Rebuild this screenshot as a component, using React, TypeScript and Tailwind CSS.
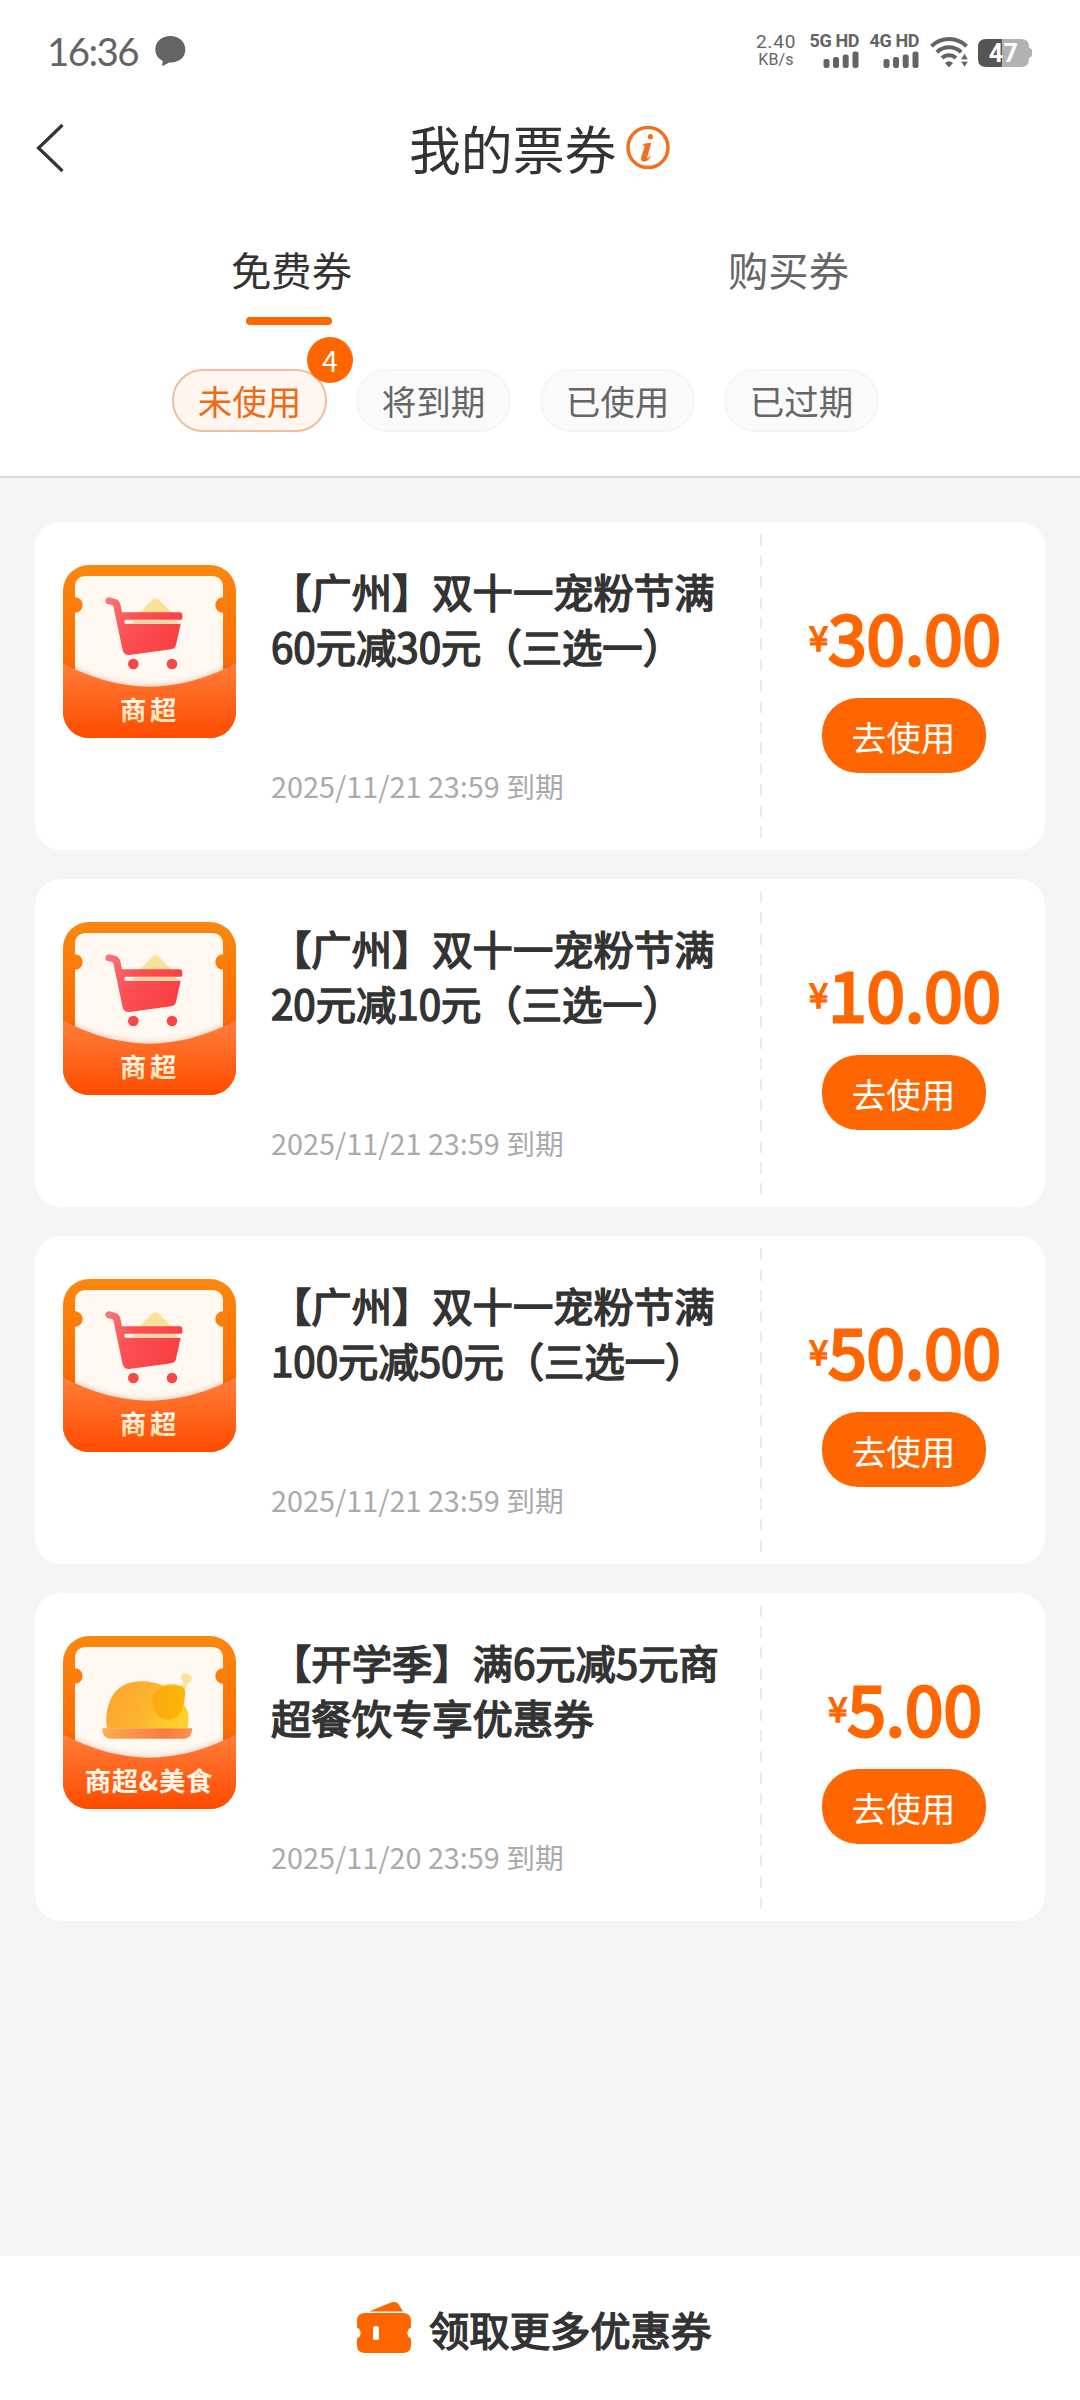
import React from "react";

type CouponKind = "market" | "food";

interface Coupon {
  title: string[];
  expires: string;
  price: string;
  kind: CouponKind;
}

const coupons: Coupon[] = [
  { title: ["【广州】双十一宠粉节满", "60元减30元（三选一）"], expires: "2025/11/21 23:59 到期", price: "30.00", kind: "market" },
  { title: ["【广州】双十一宠粉节满", "20元减10元（三选一）"], expires: "2025/11/21 23:59 到期", price: "10.00", kind: "market" },
  { title: ["【广州】双十一宠粉节满", "100元减50元（三选一）"], expires: "2025/11/21 23:59 到期", price: "50.00", kind: "market" },
  { title: ["【开学季】满6元减5元商", "超餐饮专享优惠券"], expires: "2025/11/20 23:59 到期", price: "5.00", kind: "food" },
];

function Signal({ label }: { label: string }) {
  return (
    <div className="flex w-[49px] flex-col items-end">
      <span className="whitespace-nowrap font-['Roboto'] text-[18px] font-bold leading-[16px] tracking-[-0.4px]">{label}</span>
      <svg className="mt-[2px] h-[17px] w-[36px]" viewBox="0 0 36 17" fill="currentColor">
        <rect x="0.5" y="8" width="6" height="9" rx="2.2" />
        <rect x="10" y="6" width="6" height="11" rx="2.2" />
        <rect x="19.7" y="3.5" width="6" height="13.5" rx="2.2" />
        <rect x="29.5" y="0.5" width="6" height="16.5" rx="2.2" />
      </svg>
    </div>
  );
}

function StatusBar() {
  return (
    <div className="flex h-[98px] items-start justify-between pl-[47px] pr-[48px] text-[#646464]">
      <div className="flex items-start pt-[31px]">
        <span className="font-['Lato'] text-[38.5px] leading-[40px] tracking-[-1.6px]">16:36</span>
        <svg className="ml-[17px] mt-[5px] h-[30px] w-[31px]" viewBox="0 0 31 30" fill="currentColor">
          <path d="M15.3 0C23.8 0 30.3 5.6 30.3 13.6S23.8 26.6 16 26.6c-1.600 0-2.600.2-3.600.8L8.200 29.700c-.6.3-1.100 0-1-.7l.6-4C3.400 23 .3 19 .3 13.600.3 5.600 6.900 0 15.300 0z" />
        </svg>
      </div>
      <div className="flex items-start pt-[33px]">
        <div className="mr-[13px] flex w-[42px] flex-col items-center">
          <span className="font-['Roboto'] text-[19px] leading-[18px] tracking-[0.8px]">2.40</span>
          <span className="font-['Roboto'] text-[16px] leading-[17px] tracking-[0.2px]">KB/s</span>
        </div>
        <Signal label="5G HD" />
        <div className="w-[11px]" />
        <Signal label="4G HD" />
        <svg className="ml-[11px] mt-[3px] h-[32px] w-[38px]" viewBox="0 0 38 32" fill="none" stroke="currentColor" strokeWidth="4">
          <path d="M1.500 10.200A25 25 0 0 1 36.500 10.200" />
          <path d="M6.800 16.200A17.500 17.500 0 0 1 31.200 16.200" />
          <path d="M12 22A10 10 0 0 1 26 22" />
          <path d="M15 27Q19 23.500 23 27L19 31.500Z" fill="currentColor" stroke="none" />
          <path d="M31 23.500L34.500 17.500L38 23.500ZM31 25.500H38L34.500 31Z" fill="currentColor" stroke="#fff" strokeWidth="0.300" />
        </svg>
        <svg className="ml-[10px] mt-[6px] h-[28px] w-[54px]" viewBox="0 0 54 28">
          <path d="M8 0H43Q51 0 51 8V9Q54 9.500 54 11V16Q54 18 51 19V20Q51 28 43 28H24V0Z" fill="#b2b2b2" />
          <path d="M8 0H24V28H8Q0 28 0 20V8Q0 0 8 0Z" fill="#555" />
          <text x="25.500" y="23" textAnchor="middle" fill="#fff" fontFamily="Roboto" fontWeight="700" fontSize="25" letterSpacing="0.500">47</text>
        </svg>
      </div>
    </div>
  );
}

function TitleBar() {
  return (
    <div className="flex h-[100px] items-center">
      <svg className="ml-[35px] h-[52px] w-[30px]" viewBox="0 0 30 52" fill="none" stroke="#333" strokeWidth="3.200">
        <path d="M27.500 3L3.500 26L27.500 49" />
      </svg>
      <h1 className="ml-[344px] mt-[-1px] text-[51.84px] leading-[60px] text-[#333]">我的票券</h1>
      <svg className="ml-[9px] h-[46px] w-[46px]" viewBox="0 0 46 46">
        <circle cx="23" cy="22.500" r="20" fill="none" stroke="#f07020" strokeWidth="3.500" />
        <circle cx="25.400" cy="11.700" r="2.600" fill="#f07020" />
        <path d="M17.500 20.300C20 18.700 22.500 18.200 26 18L22 32C21.500 33.800 22.500 34 25.600 31.200C24 35 21 36.600 18.500 36.300C16 36 16 34 16.600 32L19.600 22.500C20 20.800 19.500 20.300 17.500 20.300Z" fill="#f07020" stroke="#f07020" strokeWidth="0.600" />
      </svg>
    </div>
  );
}

function Tabs() {
  return (
    <div className="flex h-[127px] pl-[43px]">
      <div className="flex w-[497px] flex-col items-center pt-[46px]">
        <span className="text-[40.32px] leading-[50px] text-[#333]">免费券</span>
        <span className="mr-[5px] mt-[23px] h-2 w-[86px] rounded-full bg-[#ff6600]" />
      </div>
      <div className="flex w-[497px] flex-col items-center pt-[46px]">
        <span className="text-[40.32px] leading-[50px] text-[#666]">购买券</span>
      </div>
    </div>
  );
}

function Filters() {
  const chip = "flex h-[63px] w-[155px] items-center justify-center rounded-[31px] border-2 border-[#f5f5f5] bg-[#fafafa] pt-[1px] text-[34.56px] text-[#666]";
  return (
    <div className="flex gap-[29px] pl-[172px] pt-[44px]">
      <div className="relative flex h-[63px] w-[155px] items-center justify-center rounded-[31px] border-2 border-[#f2bd9c] bg-[#fff6f0] pt-[1px] text-[34.56px] text-[#ec6b16]">
        未使用
        <span className="absolute right-[-28px] top-[-34px] flex size-[46px] items-center justify-center rounded-full bg-[#ff6600] pb-[1px] text-[28.8px] text-white">4</span>
      </div>
      <div className={chip}>将到期</div>
      <div className={chip}>已使用</div>
      <div className={chip}>已过期</div>
    </div>
  );
}

function Cart() {
  return (
    <g>
      <path d="M222 150L268 104Q277 95 287 104L334 150Z" fill="#fbe09a" />
      <path
        d="M139 97L156 101Q169 105 172 118L177 142H350Q358 142 358 150V160Q358 164 354 164H188Q184 164 184 169V171Q184 176 188 176H353L339 240Q336 251 324 253L199 270Q183 271 179 256L151 124Q149 120 144 119L136 118Q127 115 127 107Q129 97 139 97Z"
        fill="url(#cartRed)"
      />
      <rect x="186" y="165" width="168" height="10" rx="4" fill="#fff9f2" />
      <path d="M214 166H338L344 175H206Z" fill="#fbd49a" />
      <circle cx="211" cy="297" r="16" fill="#f5484b" />
      <circle cx="327" cy="297" r="16" fill="#f5484b" />
    </g>
  );
}

function Roast() {
  return (
    <g>
      <path d="M352 154L362 137Q350 130 355 117Q361 107 371 113Q386 118 388 130Q385 141 375 140L366 164Z" fill="#fbe2a0" />
      <path d="M133 277C126 252 130 220 143 190C160 152 195 136 236 136C260 136 282 141 300 149C322 142 352 144 362 156C369 168 365 188 361 203C376 222 381 245 373 277Z" fill="url(#roastBody)" />
      <path d="M268 205C264 175 280 153 312 151C337 152 357 143 366 163C367 190 362 220 345 240C316 264 274 247 268 205Z" fill="url(#roastLeg)" />
      <path d="M118 277H387V283Q384 307 365 308H140Q118 306 118 277Z" fill="url(#plate)" />
    </g>
  );
}

function CouponIcon({ kind }: { kind: CouponKind }) {
  return (
    <svg className="size-[173px] rounded-[26px]" viewBox="0 0 519 519">
      <defs>
        <linearGradient id="frame" x1="0" y1="0" x2="0" y2="1">
          <stop offset="0" stopColor="#fa880f" />
          <stop offset="0.600" stopColor="#fe6a02" />
        </linearGradient>
        <linearGradient id="pocket" x1="0" y1="295" x2="0" y2="519" gradientUnits="userSpaceOnUse">
          <stop offset="0" stopColor="#ff7e3a" />
          <stop offset="1" stopColor="#ff4b00" />
        </linearGradient>
        <linearGradient id="cartRed" x1="0" y1="0" x2="1" y2="0.400">
          <stop offset="0" stopColor="#f77a7a" />
          <stop offset="0.450" stopColor="#fb5055" />
          <stop offset="1" stopColor="#fb4043" />
        </linearGradient>
        <linearGradient id="roastBody" x1="0" y1="0" x2="1" y2="0.300">
          <stop offset="0" stopColor="#fca32f" />
          <stop offset="0.600" stopColor="#fdb52f" />
          <stop offset="1" stopColor="#fdd02c" />
        </linearGradient>
        <linearGradient id="roastLeg" x1="0" y1="0" x2="1" y2="0">
          <stop offset="0" stopColor="#fba912" />
          <stop offset="1" stopColor="#fdb704" />
        </linearGradient>
        <linearGradient id="plate" x1="0" y1="0" x2="1" y2="0">
          <stop offset="0" stopColor="#fcae4c" />
          <stop offset="0.700" stopColor="#f97b40" />
          <stop offset="1" stopColor="#fb934a" />
        </linearGradient>
        <linearGradient id="label" x1="0" y1="0" x2="0" y2="1">
          <stop offset="0.300" stopColor="#fffaf0" />
          <stop offset="1" stopColor="#ffd79a" />
        </linearGradient>
        <filter id="soft" x="-20%" y="-20%" width="140%" height="140%">
          <feGaussianBlur stdDeviation="11" />
        </filter>
      </defs>
      <rect width="519" height="519" fill="url(#frame)" />
      <path d="M71 33H445Q480 33 480 68V97A23 23 0 0 0 480 143V420H36V143A23 23 0 0 0 36 97V68Q36 33 71 33Z" fill="#fff9f2" />
      {kind === "market" ? <Cart /> : <Roast />}
      <path d="M0 295Q259 435 519 295V519H0Z" fill="#b0502c" opacity="0.350" filter="url(#soft)" />
      <path d="M0 295Q259 435 519 295V519H0Z" fill="url(#pocket)" />
      {kind === "market" ? (
        <text x="171" y="466" fontFamily="Noto Sans CJK SC" fontWeight="700" fontSize="79" letterSpacing="11" fill="url(#label)">商超</text>
      ) : (
        <text x="65" y="465" fontFamily="Noto Sans CJK SC" fontWeight="700" fontSize="79" textLength="383" fill="#fff6e8">商超&amp;美食</text>
      )}
    </svg>
  );
}

function CouponCard({ coupon }: { coupon: Coupon }) {
  return (
    <article className="flex h-[328px] rounded-[26px] bg-white">
      <div className="ml-[28px] mt-[43px] w-[173px] shrink-0">
        <CouponIcon kind={coupon.kind} />
      </div>
      <div className="ml-[35px] flex w-[489px] shrink-0 flex-col pt-[41px]">
        <h2 className="whitespace-nowrap text-[40.32px] leading-[55px] text-[#333] [-webkit-text-stroke:1.5px_#333]">
          {coupon.title.map((line) => (
            <span key={line} className="block">{line}</span>
          ))}
        </h2>
        <p className="mt-[92px] text-[28.8px] leading-[42px] text-[#aaa]">{coupon.expires}</p>
      </div>
      <div className="mt-[12px] h-[304px] w-[2px] shrink-0 bg-[repeating-linear-gradient(to_bottom,#ebebeb_0,#ebebeb_12px,transparent_12px,transparent_20.85px)]" />
      <div className="flex flex-1 flex-col items-center pt-[67px]">
        <div className="flex items-center pl-[3px] text-[#ff6600]">
          <span className="pt-[2px] text-[34.56px] leading-[90px] [-webkit-text-stroke:1.5px_#ff6600]">¥</span>
          <span className="text-[69.12px] leading-[90px] [-webkit-text-stroke:3px_#ff6600]">{coupon.price}</span>
        </div>
        <button className="mt-[17px] flex h-[75px] w-[164px] items-center justify-center rounded-[36px] bg-[#ff6600] pt-[2px] text-[34.56px] text-white">去使用</button>
      </div>
    </article>
  );
}

function TicketGlyph() {
  return (
    <svg className="h-[54px] w-[56px]" viewBox="0 0 56 54" fill="#ff6600">
      <path d="M13 10.500L35 1.500Q41-.3 43.500 4.500L47 10.500Z" />
      <path fillRule="evenodd" d="M9 12H47Q55 12 55 20V26.500A6 6 0 0 0 55 37.500V44Q55 52 47 52H9Q1 52 1 44V37.500A6 6 0 0 0 1 26.500V20Q1 12 9 12ZM19.500 25Q17 25 17 27.500V36.500Q17 39 19.500 39H20.500Q23 39 23 36.500V27.500Q23 25 20.500 25Z" />
    </svg>
  );
}

export default function App() {
  return (
    <div className="flex h-[2400px] w-[1080px] flex-col overflow-hidden bg-[#f5f5f5] font-['Noto_Sans_CJK_SC',sans-serif]">
      <header className="h-[478px] shrink-0 border-b-2 border-[#d9d9d9] bg-white">
        <StatusBar />
        <TitleBar />
        <Tabs />
        <Filters />
      </header>
      <main className="flex flex-1 flex-col gap-[29px] px-[35px] pt-[44px]">
        {coupons.map((coupon) => (
          <CouponCard key={coupon.price} coupon={coupon} />
        ))}
      </main>
      <footer className="flex h-[144px] shrink-0 items-center bg-white pl-[356px]">
        <TicketGlyph />
        <span className="ml-[17px] mt-[1px] text-[40.32px] leading-[50px] text-[#333] [-webkit-text-stroke:1.5px_#333]">领取更多优惠券</span>
      </footer>
    </div>
  );
}
